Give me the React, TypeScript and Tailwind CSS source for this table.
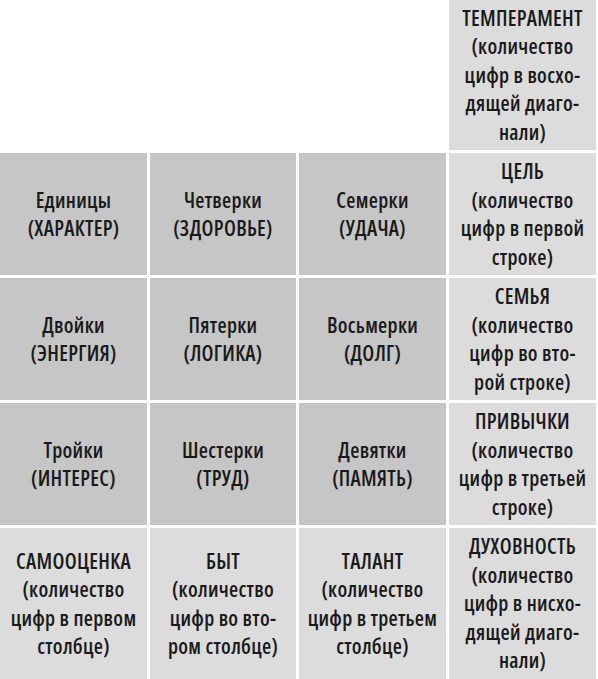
const DARK = "bg-[#c6c6c6]";
const LIGHT = "bg-[#dcdcdc]";

type Cell = { lines: string[]; tone: "none" | "dark" | "light" };

const rows: Cell[][] = [
  [
    { lines: [], tone: "none" },
    { lines: [], tone: "none" },
    { lines: [], tone: "none" },
    {
      lines: ["ТЕМПЕРАМЕНТ", "(количество", "цифр в восхо-", "дящей диаго-", "нали)"],
      tone: "light",
    },
  ],
  [
    { lines: ["Единицы", "(ХАРАКТЕР)"], tone: "dark" },
    { lines: ["Четверки", "(ЗДОРОВЬЕ)"], tone: "dark" },
    { lines: ["Семерки", "(УДАЧА)"], tone: "dark" },
    { lines: ["ЦЕЛЬ", "(количество", "цифр в первой", "строке)"], tone: "light" },
  ],
  [
    { lines: ["Двойки", "(ЭНЕРГИЯ)"], tone: "dark" },
    { lines: ["Пятерки", "(ЛОГИКА)"], tone: "dark" },
    { lines: ["Восьмерки", "(ДОЛГ)"], tone: "dark" },
    { lines: ["СЕМЬЯ", "(количество", "цифр во вто-", "рой строке)"], tone: "light" },
  ],
  [
    { lines: ["Тройки", "(ИНТЕРЕС)"], tone: "dark" },
    { lines: ["Шестерки", "(ТРУД)"], tone: "dark" },
    { lines: ["Девятки", "(ПАМЯТЬ)"], tone: "dark" },
    { lines: ["ПРИВЫЧКИ", "(количество", "цифр в третьей", "строке)"], tone: "light" },
  ],
  [
    { lines: ["САМООЦЕНКА", "(количество", "цифр в первом", "столбце)"], tone: "light" },
    { lines: ["БЫТ", "(количество", "цифр во вто-", "ром столбце)"], tone: "light" },
    { lines: ["ТАЛАНТ", "(количество", "цифр в третьем", "столбце)"], tone: "light" },
    {
      lines: ["ДУХОВНОСТЬ", "(количество", "цифр в нисхо-", "дящей диаго-", "нали)"],
      tone: "light",
    },
  ],
];

export default function App() {
  return (
    <div className="w-[598px] h-[679px] bg-white overflow-hidden">
      <div className="grid grid-cols-[147px_146px_147px_147px] grid-rows-[150px_122px_122px_122px_151px] gap-[3px] text-[#1a1a1a] text-[21px] leading-[28.5px] font-[650] tracking-[0.3px] font-['Open_Sans',sans-serif] [font-stretch:condensed]">
        {rows.flat().map((cell, i) => (
          <div
            key={i}
            className={`flex flex-col items-center justify-center text-center ${
              cell.tone === "dark" ? DARK : cell.tone === "light" ? LIGHT : "bg-white"
            }`}
          >
            {cell.lines.map((line) => (
              <span key={line} className="whitespace-nowrap">
                {line}
              </span>
            ))}
          </div>
        ))}
      </div>
    </div>
  );
}
